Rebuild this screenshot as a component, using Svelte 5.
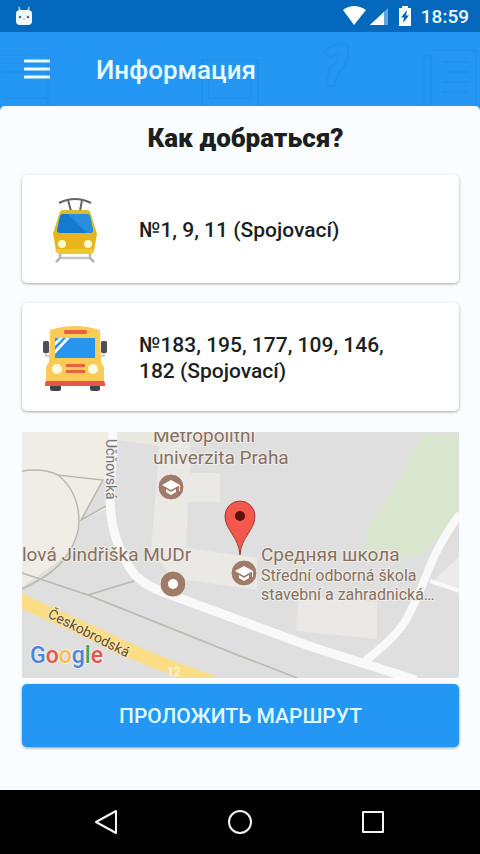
<script lang="ts">
  interface Route {
    kind: "tram" | "bus";
    label: string;
  }

  const routes: Route[] = [
    { kind: "tram", label: "№1, 9, 11 (Spojovací)" },
    { kind: "bus", label: "№183, 195, 177, 109, 146, 182 (Spojovací)" },
  ];
</script>

<div class="screen">
  <div class="status-bar">
    <svg class="debug-icon" viewBox="0 0 18 20" aria-hidden="true">
      <path d="M4 1 L5 5 M14 1 L13 5" stroke="#a9d6ee" stroke-width="1.5" />
      <rect x="1" y="4" width="16" height="15" rx="4" fill="#eefaff" />
      <circle cx="5" cy="11" r="1.3" fill="#54697a" />
      <circle cx="13" cy="11" r="1.3" fill="#54697a" />
      <path d="M7.500 12.500 H10.500 L9 14.500 Z" fill="#f3ad83" />
    </svg>
    <div class="status-right">
      <svg class="signal-icons" viewBox="0 0 70 20" aria-hidden="true">
        <path d="M1 4 Q12 -4 24 4 L12 19 Z" fill="#fff" />
        <path d="M46 2 V19 H28 Z" fill="#5fa5dd" />
        <path d="M42 6 V19 H28 Z" fill="#fff" />
        <path d="M60 0 H66 V2 H69 V20 H57 V2 H60 Z" fill="#fff" />
        <path d="M65 4 L59 11.500 H62 L61 17 L67 9.500 H64 Z" fill="#0667ba" />
      </svg>
      <time>18:59</time>
    </div>
  </div>

  <header class="app-bar">
    <svg class="pattern" viewBox="0 0 480 74" preserveAspectRatio="xMidYMid slice" aria-hidden="true">
      <g fill="none" stroke="#1c88e2" stroke-width="2" opacity="0.35">
        <path d="M0 23 H48 V74 M0 31 H42 M3 40 H40 M5 66 H48" />
        <path d="M202 74 V28 H258 V74 M209 36 H251 V66 H209 Z" />
        <path d="M324 20 Q336 8 348 14 Q350 30 338 42 L334 54 H326 L330 36 Q340 30 338 20 L330 26 Z" />
        <path d="M424 74 V24 H431 V74 M431 18 H476 V74 M442 30 H468 M442 40 H468 M442 50 H468 M442 60 H468" />
      </g>
    </svg>
    <button class="menu-button" aria-label="Меню">
      <svg viewBox="0 0 26 20" aria-hidden="true">
        <path d="M1 2 H25 M1 10 H25 M1 18 H25" stroke="#e8fbff" stroke-width="3" stroke-linecap="round" />
      </svg>
    </button>
    <h1>Информация</h1>
  </header>

  <main>
    <h2>Как добраться?</h2>

    <ul class="routes">
      {#each routes as route}
        <li class="card">
          {#if route.kind === "tram"}
            <svg class="vehicle" viewBox="0 0 66 66" aria-hidden="true">
              <path d="M17 6 Q33 -2 49 6" fill="none" stroke="#666" stroke-width="2.200" />
              <path d="M26 3 L29 14 M40 3 L38 14" stroke="#666" stroke-width="2" />
              <path d="M17 61 H49" stroke="#c4c4c4" stroke-width="2.500" />
              <path d="M18 57 V61 L14 65 M48 57 V61 L52 65" fill="none" stroke="#b5b5b5" stroke-width="2.500" />
              <path d="M18 15 Q19 13 22 13 H44 Q47 13 48 15 L55 37 L52 53 Q51 56 48 56 H18 Q15 56 14 53 L11 37 Z" fill="#e8b51c" />
              <path d="M18 15 Q19 13 22 13 H44 Q47 13 48 15 L54 34 H12 Z" fill="#d5bd3a" />
              <path d="M13 52 H53 L52 54 Q51 57 48 57 H18 Q15 57 14 54 Z" fill="#f0c82d" />
              <path d="M18 19 Q19 17 21 17 H45 Q47 17 48 19 L51 33 Q51 36 48 36 H18 Q15 36 15 33 Z" fill="#1479cf" />
              <path d="M26 17 H45 Q47 17 48 19 L51 33 Q51 36 48 36 H45 Z" fill="#2b8dde" />
              <circle cx="20" cy="47" r="4" fill="#fff9ce" />
              <circle cx="46" cy="47" r="4" fill="#fff9ce" />
            </svg>
          {:else}
            <svg class="vehicle" viewBox="0 0 66 66" aria-hidden="true">
              <path d="M4 27 V31 H10 M62 27 V31 H56" fill="none" stroke="#b9c0c4" stroke-width="1.500" />
              <rect x="1" y="16" width="6" height="12" rx="1.500" fill="#4a5158" />
              <rect x="59" y="16" width="6" height="12" rx="1.500" fill="#4a5158" />
              <rect x="8" y="57" width="11" height="9" rx="2.500" fill="#3d454c" />
              <rect x="48" y="57" width="10" height="9" rx="2.500" fill="#3d454c" />
              <path d="M8 5 Q33 -3 58 5 L59 37 L62 42 V58 H4 V42 L7 37 Z" fill="#fbcb57" />
              <path d="M5 56 H61 Q63 56 63 59 V61 H3 V59 Q3 56 5 56 Z" fill="#e8554a" />
              <rect x="22" y="5" width="23" height="4" rx="1.500" fill="#e8613f" />
              <rect x="13" y="13" width="40" height="20" fill="#2795ee" />
              <path d="M13 13 H28 L13 29 Z" fill="#fff" />
              <path d="M13 13 H17 L13 17 Z M21 13 H24 L13 25 V21 Z" fill="#2795ee" />
              <rect x="24" y="39" width="19" height="3" fill="#e8613f" />
              <rect x="24" y="45" width="19" height="3" fill="#e8613f" />
              <circle cx="15" cy="44" r="5" fill="#fffbe2" />
              <circle cx="51" cy="44" r="5" fill="#fffbe2" />
            </svg>
          {/if}
          <span class="route-label">{route.label}</span>
        </li>
      {/each}
    </ul>

    <svg class="map" viewBox="0 0 437 246" preserveAspectRatio="xMidYMid slice" role="img" aria-label="Карта">
      <rect width="438" height="246" fill="#dfdfdf" />

      <!-- blocks and buildings -->
      <path d="M0 0 H90 V74 L59 89 L55 105 L48 121 L0 155 Z" fill="#efede5" />
      <path d="M80 49 L59 88 L86 73 V49 Z" fill="#dedede" />
      <path d="M94 0 H150 L138 14 L94 8 Z" fill="#e9e8e1" />
      <path d="M138 8 H168 V41 H198 V70 H166 L164 116 L235 126 V158 L150 146 L129 118 Z" fill="#ebe9e5" />
      <path d="M277 164 L355 170 V207 L274 199 Z" fill="#ebe8e5" />
      <path d="M400 2 H438 V77 L401 124 L340 128 L344 100 Q350 85 364 71 Z" fill="#d9e5cd" />
      <path d="M412 148 L438 124 V157 Z" fill="#ebebeb" />

      <!-- footpaths -->
      <g fill="none" stroke="#b9b7ae" stroke-width="1.500">
        <path d="M0 39 Q22 36 36 43 Q57 60 57 90 Q57 105 45 123 Q34 141 0 157" />
        <path d="M36 43 L81 48 L59 88 L86 73" />
        <path d="M0 141 L66 163 L218 224 Q245 234 275 246 M66 163 L112 149" />
      </g>

      <!-- roads -->
      <g fill="none" stroke="#f9f9f9" stroke-width="9">
        <path d="M91 0 L88 65 Q88 105 108 136 Q116 150 138 159 L290 215 L394 248" />
        <path d="M343 229 Q368 210 380 194 Q390 180 406 139 Q417 110 438 82" stroke-width="8" />
        <path d="M408 149 L438 159" stroke-width="4" />
      </g>
      <path d="M-5 167 L75 203 Q118 225 170 243 L195 252" fill="none" stroke="#fbdd85" stroke-width="14" />
      <text x="145" y="244" class="road-number">12</text>

      <text class="street" transform="translate(84 7) rotate(90)">Učňovská</text>
      <text class="street dark" transform="translate(25 185) rotate(27)">Českobrodská</text>

      <!-- places -->
      {#each [[149, 55], [222, 141]] as [x, y]}
        <g transform="translate({x} {y})">
          <circle r="13" fill="#a07b68" stroke="#f2efec" />
          <path d="M0 -7 L9 -2 L0 3 L-9 -2 Z M-5 2 L0 5 L5 2 V5 L0 8 L-5 5 Z M8 -2 H9 V4 H8 Z" fill="#fff" />
        </g>
      {/each}
      <circle cx="151" cy="152" r="13" fill="#a07b68" stroke="#f2efec" />
      <circle cx="151" cy="152" r="5" fill="#fff" />

      <text x="131" y="10" class="place">Metropolitní</text>
      <text x="131" y="32" class="place">univerzita Praha</text>
      <text x="0" y="129" class="place">lová Jindřiška MUDr</text>
      <text x="239" y="129" class="place">Средняя школа</text>
      <text x="239" y="149" class="place small">Střední odborná škola</text>
      <text x="239" y="168" class="place small">stavební a zahradnická…</text>

      <path d="M218 123 C217 105 203 98 203 84 A15 15 0 0 1 233 84 C233 98 219 105 218 123 Z" fill="#f4584c" stroke="#9c3b34" />
      <circle cx="218" cy="84" r="5" fill="#5d1210" />

      <text x="8" y="231" class="logo">
        <tspan fill="#4a86e0">G</tspan><tspan fill="#e2574c">o</tspan><tspan fill="#f3c14b">o</tspan><tspan fill="#4a86e0">g</tspan><tspan fill="#3fa462">l</tspan><tspan fill="#e2574c">e</tspan>
      </text>
    </svg>

    <button class="route-button">ПРОЛОЖИТЬ МАРШРУТ</button>
  </main>

  <nav class="system-nav" aria-label="Навигация">
    <button aria-label="Назад">
      <svg viewBox="0 0 26 26" aria-hidden="true"><path d="M22 2 V24 L2 13 Z" /></svg>
    </button>
    <button aria-label="Домой">
      <svg viewBox="0 0 26 26" aria-hidden="true"><circle cx="13" cy="13" r="11" /></svg>
    </button>
    <button aria-label="Недавние">
      <svg viewBox="0 0 26 26" aria-hidden="true"><rect x="3" y="3" width="20" height="20" /></svg>
    </button>
  </nav>
</div>

<style>
  :global(body) {
    margin: 0;
    background: #fafdff;
  }

  .screen {
    display: flex;
    flex-direction: column;
    min-height: 100vh;
    background: #2496f3;
    font-family: Roboto, "Noto Sans", sans-serif;
    color: #1b1f22;
  }

  button {
    border: 0;
    padding: 0;
    background: none;
    font-family: inherit;
    cursor: pointer;
  }

  svg {
    display: block;
  }

  .status-bar {
    display: flex;
    align-items: center;
    justify-content: space-between;
    height: 32px;
    padding: 0 11px 0 15px;
    background: #0468bd;
    color: #f2fbff;
  }

  .debug-icon {
    width: 18px;
    height: 20px;
  }

  .status-right {
    display: flex;
    align-items: center;
    gap: 9px;
    font-size: 19px;
    font-weight: 500;
  }

  .signal-icons {
    width: 70px;
    height: 20px;
  }

  .app-bar {
    position: relative;
    display: flex;
    align-items: center;
    gap: 46px;
    height: 74px;
    padding: 0 24px;
  }

  .pattern {
    position: absolute;
    inset: 0;
    width: 100%;
    height: 100%;
  }

  .menu-button {
    position: relative;
  }

  .menu-button svg {
    width: 26px;
    height: 20px;
  }

  h1 {
    position: relative;
    margin: 0;
    padding-top: 2px;
    color: #e8fbff;
    font-size: 26px;
    font-weight: 500;
  }

  main {
    display: flex;
    flex: 1;
    flex-direction: column;
    padding: 14px 21px 24px 22px;
    border-radius: 5px 5px 0 0;
    background: #fafdff;
  }

  h2 {
    margin: 0 0 19px;
    padding-left: 10px;
    font-size: 26px;
    font-weight: 900;
    line-height: 36px;
    text-align: center;
  }

  .routes {
    display: grid;
    gap: 20px;
    margin: 0 0 21px;
    padding: 0;
    list-style: none;
  }

  .card {
    display: flex;
    align-items: center;
    gap: 31px;
    min-height: 108px;
    box-sizing: border-box;
    padding: 14px 48px 12px 20px;
    border-radius: 5px;
    background: #fff;
    box-shadow: 0 1px 3px rgba(0, 0, 0, 0.35);
  }

  .vehicle {
    flex: none;
    width: 66px;
    height: 66px;
  }

  .route-label {
    font-size: 21px;
    font-weight: 500;
    line-height: 26px;
  }

  .map {
    width: 100%;
    margin-bottom: 6px;
  }

  .map text {
    paint-order: stroke;
    stroke: #f0eeea;
    stroke-width: 2px;
  }

  .map .place {
    fill: #87705f;
    font-size: 19px;
  }

  .map .small {
    font-size: 16px;
  }

  .map .street {
    fill: #77777a;
    font-size: 14px;
  }

  .map .dark {
    fill: #5f4d2e;
    stroke: #fbe9b5;
  }

  .map .road-number {
    fill: #fff;
    stroke: none;
    font-size: 12px;
  }

  .map .logo {
    font-size: 23px;
    font-weight: 500;
  }

  .route-button {
    height: 63px;
    border-radius: 5px;
    background: #2496f3;
    box-shadow: 0 1px 3px rgba(0, 0, 0, 0.4);
    color: #dffbff;
    font-size: 21px;
    font-weight: 500;
  }

  .system-nav {
    display: flex;
    justify-content: center;
    gap: 107px;
    height: 64px;
    background: #000;
  }

  .system-nav svg {
    width: 26px;
    height: 26px;
    fill: none;
    stroke: #f4f4f4;
    stroke-width: 2px;
    stroke-linejoin: round;
  }
</style>
